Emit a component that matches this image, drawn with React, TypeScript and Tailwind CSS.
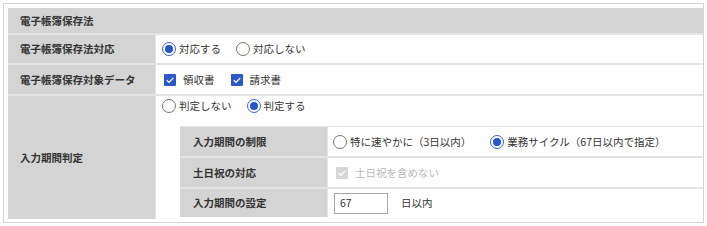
import React from "react";

const FONT = { fontFamily: '"Noto Sans CJK JP", "Noto Sans", sans-serif' };

function Radio({ checked, label }: { checked?: boolean; label: string }) {
  return (
    <span className="flex items-center">
      <span
        className={
          "w-[14px] h-[14px] rounded-full border flex items-center justify-center bg-white " +
          (checked ? "border-[#3a63d6]" : "border-[#767676]")
        }
      >
        {checked ? <span className="w-[8px] h-[8px] rounded-full bg-[#2855c9]" /> : null}
      </span>
      <span className="ml-[3px]">{label}</span>
    </span>
  );
}

function Check({ label, disabled }: { label: string; disabled?: boolean }) {
  return (
    <span className="flex items-center">
      <span
        className={
          "w-[12px] h-[12px] flex items-center justify-center rounded-[1px] " +
          (disabled ? "bg-[#d6d6d6]" : "bg-[#2c57c9]")
        }
      >
        <svg width="10" height="10" viewBox="0 0 10 10">
          <path d="M1.8 5.2 L4 7.3 L8.3 2.8" fill="none" stroke="white" strokeWidth="1.2" />
        </svg>
      </span>
      <span className={"ml-[7px] " + (disabled ? "text-[#b8b8b8]" : "")}>{label}</span>
    </span>
  );
}

export default function App() {
  return (
    <div className="pl-[3px] pt-[3px] bg-white w-[707px] h-[226px] text-[#333] text-[10.5px]" style={FONT}>
      <div className="w-[701px] h-[220px] border border-[#d4d4d4] pl-[4px] pt-[4px] pb-[2px] bg-white">
        <div className="flex flex-col gap-[2px] bg-[#e4e4e4]">
          <div className="h-[25px] bg-[#d4d4d4] flex items-center pl-[12px] font-bold">電子帳簿保存法</div>
          <div className="h-[28px] grid grid-cols-[147px_1fr] gap-x-[1px]">
            <div className="bg-[#d4d4d4] flex items-center pl-[12px] font-bold">電子帳簿保存法対応</div>
            <div className="bg-white flex items-center pl-[6px] gap-[15px]">
              <Radio checked label="対応する" />
              <Radio label="対応しない" />
            </div>
          </div>
          <div className="h-[29px] grid grid-cols-[147px_1fr] gap-x-[1px]">
            <div className="bg-[#d4d4d4] flex items-center pl-[12px] font-bold">電子帳簿保存対象データ</div>
            <div className="bg-white flex items-center pl-[8px] gap-[16px]">
              <Check label="領収書" />
              <Check label="請求書" />
            </div>
          </div>
          <div className="h-[123px] grid grid-cols-[147px_1fr] gap-x-[1px]">
            <div className="bg-[#d4d4d4] flex items-center pl-[12px] font-bold">入力期間判定</div>
            <div className="bg-white flex flex-col">
              <div className="h-[30px] flex items-start pt-[2px] pl-[6px] gap-[15px]">
                <Radio label="判定しない" />
                <Radio checked label="判定する" />
              </div>
              <div className="ml-[24px] flex flex-col gap-[2px] bg-[#e4e4e4] pt-[1px]">
                <div className="h-[29px] grid grid-cols-[147px_1fr] gap-x-[1px]">
                  <div className="bg-[#d4d4d4] flex items-center pl-[13px] font-bold">入力期間の制限</div>
                  <div className="bg-white flex items-center pl-[5px] gap-[19px]">
                    <Radio label="特に速やかに（3日以内）" />
                    <Radio checked label="業務サイクル（67日以内で指定）" />
                  </div>
                </div>
                <div className="h-[29px] grid grid-cols-[147px_1fr] gap-x-[1px]">
                  <div className="bg-[#d4d4d4] flex items-center pl-[13px] font-bold">土日祝の対応</div>
                  <div className="bg-white flex items-center pl-[8px]">
                    <Check disabled label="土日祝を含めない" />
                  </div>
                </div>
                <div className="h-[28px] grid grid-cols-[147px_1fr] gap-x-[1px]">
                  <div className="bg-[#d4d4d4] flex items-center pl-[13px] font-bold">入力期間の設定</div>
                  <div className="bg-white flex items-center pl-[6px]">
                    <div className="w-[54px] h-[21px] border border-[#a8a8a8] flex items-center pl-[5px]">67</div>
                    <span className="ml-[13px]">日以内</span>
                  </div>
                </div>
              </div>
            </div>
          </div>
        </div>
      </div>
    </div>
  );
}
